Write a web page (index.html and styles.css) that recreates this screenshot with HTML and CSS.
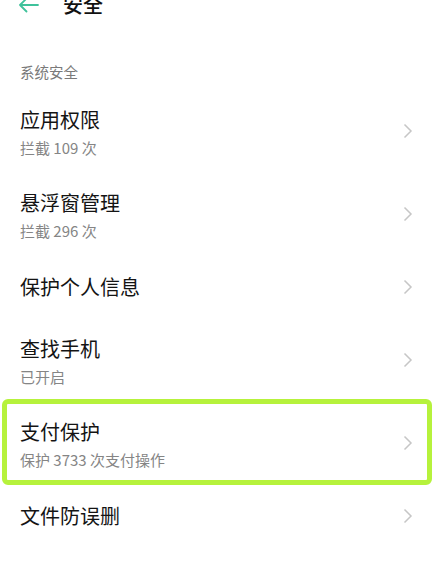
FILE: index.html
```html
<!DOCTYPE html>
<html lang="zh">
<head>
<meta charset="utf-8">
<link rel="stylesheet" href="styles.css">
</head>
<body>
<header class="top">
  <svg class="back" width="22" height="16" viewBox="0 0 22 16"><path d="M21 8H3M9.5 1.5L3 8l6.5 6.5" fill="none" stroke="#3fc29b" stroke-width="1.8" stroke-linecap="round" stroke-linejoin="round"/></svg>
  <h1 class="title">安全</h1>
</header>
<div class="section">系统安全</div>
<ul class="list">
  <li class="row two"><div class="txt"><div class="t">应用权限</div><div class="s">拦截 109 次</div></div><svg class="chev" width="10" height="16" viewBox="0 0 10 16"><path d="M1.5 1.5L8 8l-6.5 6.5" fill="none" stroke="#c6c6c6" stroke-width="1.5"/></svg></li>
  <li class="row two"><div class="txt"><div class="t">悬浮窗管理</div><div class="s">拦截 296 次</div></div><svg class="chev" width="10" height="16" viewBox="0 0 10 16"><path d="M1.5 1.5L8 8l-6.5 6.5" fill="none" stroke="#c6c6c6" stroke-width="1.5"/></svg></li>
  <li class="row one"><div class="txt"><div class="t">保护个人信息</div></div><svg class="chev" width="10" height="16" viewBox="0 0 10 16"><path d="M1.5 1.5L8 8l-6.5 6.5" fill="none" stroke="#c6c6c6" stroke-width="1.5"/></svg></li>
  <li class="row two"><div class="txt"><div class="t">查找手机</div><div class="s">已开启</div></div><svg class="chev" width="10" height="16" viewBox="0 0 10 16"><path d="M1.5 1.5L8 8l-6.5 6.5" fill="none" stroke="#c6c6c6" stroke-width="1.5"/></svg></li>
  <li class="row two hl"><div class="txt"><div class="t">支付保护</div><div class="s">保护 3733 次支付操作</div></div><svg class="chev" width="10" height="16" viewBox="0 0 10 16"><path d="M1.5 1.5L8 8l-6.5 6.5" fill="none" stroke="#c6c6c6" stroke-width="1.5"/></svg></li>
  <li class="row one"><div class="txt"><div class="t">文件防误删</div></div><svg class="chev" width="10" height="16" viewBox="0 0 10 16"><path d="M1.5 1.5L8 8l-6.5 6.5" fill="none" stroke="#c6c6c6" stroke-width="1.5"/></svg></li>
</ul>
</body>
</html>
```
FILE: styles.css
```css
html, body {
  margin: 0;
  padding: 0;
  background: #fff;
  overflow: hidden;
}
body {
  font-family: "Noto Sans CJK SC", "Noto Sans", sans-serif;
  color: #161616;
}
.top {
  display: flex;
  align-items: center;
  height: 24px;
  margin-top: -7px;
  padding-left: 17px;
}
.back {
  display: block;
}
.title {
  margin: 0 0 0 24px;
  font-size: 20px;
  font-weight: 500;
  line-height: 24px;
  color: #111;
}
.section {
  margin-top: 45px;
  padding-left: 20px;
  font-size: 14.5px;
  line-height: 20px;
  color: #7a7a7a;
}
.list {
  list-style: none;
  margin: 7px 0 0;
  padding: 0;
}
.row {
  position: relative;
  display: flex;
  align-items: center;
  justify-content: space-between;
  padding: 0 23px 0 20px;
  box-sizing: border-box;
}
.row.two { height: 83px; }
.row.one { height: 63px; }
.txt {
  display: flex;
  flex-direction: column;
  gap: 4px;
}
.two .txt { margin-top: 2px; }
.t {
  font-size: 20px;
  line-height: 28px;
  color: #141414;
}
.s {
  font-size: 15px;
  line-height: 20px;
  color: #858585;
}
.chev { display: block; }
.hl::after {
  content: "";
  position: absolute;
  top: -2px;
  bottom: -1px;
  left: 2px;
  right: 4px;
  border: 5px solid #b6f23c;
  border-radius: 6px;
  pointer-events: none;
}
```
